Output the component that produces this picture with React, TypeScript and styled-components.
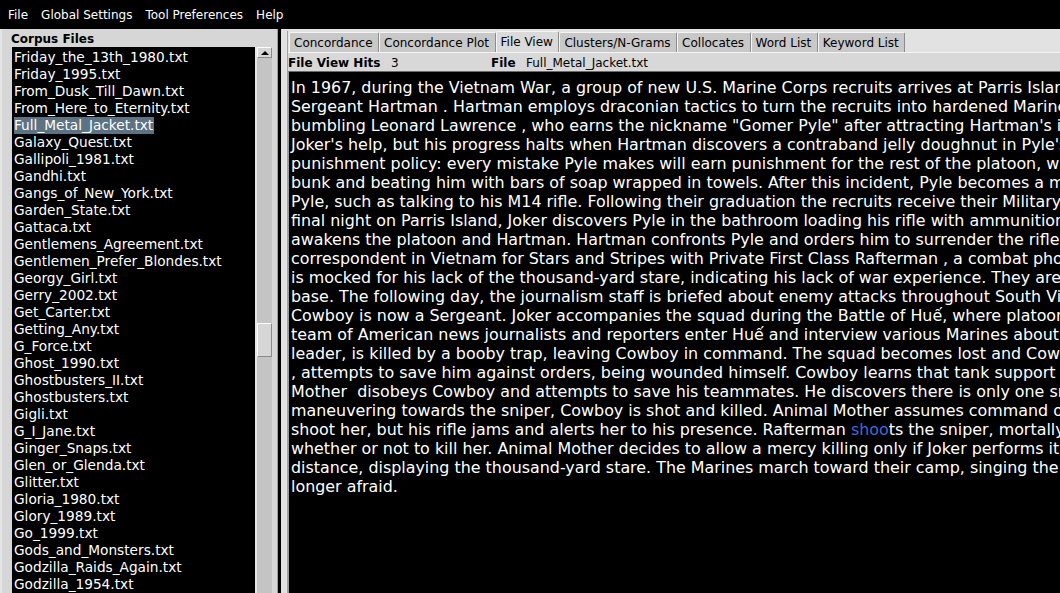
import React from 'react';
import styled, { createGlobalStyle } from 'styled-components';

const GlobalStyle = createGlobalStyle`
  html, body {
    margin: 0;
    padding: 0;
    overflow: hidden;
    background: #000;
  }
  * {
    box-sizing: border-box;
  }
`;

const Window = styled.div`
  width: 1060px;
  height: 593px;
  display: flex;
  flex-direction: column;
  overflow: hidden;
  font-family: 'DejaVu Sans', 'Liberation Sans', sans-serif;
  background: #d6d6d6;
`;

const MenuBar = styled.div`
  height: 29px;
  flex-shrink: 0;
  background: #000;
  display: flex;
  align-items: center;
  padding-left: 8px;
`;

const MenuItem = styled.span`
  color: #fff;
  font-size: 12px;
  margin-right: 13px;
`;

const Body = styled.div`
  flex: 1;
  display: flex;
  min-height: 0;
`;

const LeftPanel = styled.div`
  width: 277px;
  flex-shrink: 0;
  display: flex;
  flex-direction: column;
  background: #d6d6d6;
  border-left: 2px solid #e4e4e4;
`;

const PanelTitle = styled.div`
  height: 18px;
  flex-shrink: 0;
  padding: 1px 0 0 9px;
  font-size: 12px;
  font-weight: 700;
  color: #000;
  display: flex;
  align-items: center;
`;

const ListRow = styled.div`
  flex: 1;
  display: flex;
  min-height: 0;
  padding-left: 10px;
  padding-right: 5px;
`;

const FileList = styled.div`
  flex: 1;
  background: #000;
  padding: 2px 2px 0;
  overflow: hidden;
`;

const FileItem = styled.div`
  height: 17px;
  line-height: 17px;
  font-size: 13.7px;
  color: #fff;
  white-space: nowrap;
`;

const FileName = styled.span<{ $selected?: boolean }>`
  display: inline-block;
  height: 17px;
  padding-right: 1px;
  background: ${(p) => (p.$selected ? '#5d7283' : 'transparent')};
`;

const ScrollBar = styled.div`
  width: 17px;
  flex-shrink: 0;
  display: flex;
  flex-direction: column;
  background: #c4c4c4;
  border-left: 2px solid #e6e6e6;
`;

const ArrowButton = styled.div`
  height: 11px;
  background: #d6d6d6;
  border-top: 1px solid #fff;
  border-left: 1px solid #fff;
  border-bottom: 1px solid #8a8a8a;
  border-right: 1px solid #8a8a8a;
  display: flex;
  align-items: center;
  justify-content: center;
`;

const ArrowUp = styled.div`
  width: 0;
  height: 0;
  border-left: 4px solid transparent;
  border-right: 4px solid transparent;
  border-bottom: 4px solid #000;
`;

const Track = styled.div<{ $before: number }>`
  flex: 1;
  padding-top: ${(p) => p.$before}px;
`;

const Thumb = styled.div`
  height: 34px;
  background: #d6d6d6;
  border-top: 1px solid #fff;
  border-left: 1px solid #fff;
  border-bottom: 1px solid #8a8a8a;
  border-right: 1px solid #8a8a8a;
`;

const Divider = styled.div`
  width: 4px;
  flex-shrink: 0;
  background: #000;
  border-left: 1px solid #9a9a9a;
`;

const RightPanel = styled.div`
  flex: 1;
  min-width: 0;
  display: flex;
  flex-direction: column;
  background: #e2e2e2;
  padding: 2px 0 0 6px;
`;

const TabPane = styled.div`
  flex: 1;
  display: flex;
  flex-direction: column;
  min-height: 0;
  border-left: 1px solid #a0a0a0;
`;

const TabRow = styled.div`
  height: 21px;
  flex-shrink: 0;
  display: flex;
  align-items: flex-end;
  padding-left: 1px;
`;

const Tab = styled.div<{ $active?: boolean }>`
  height: ${(p) => (p.$active ? 21 : 20)}px;
  padding: 0 5.5px 0 4px;
  font-size: 12px;
  color: #000;
  display: flex;
  align-items: center;
  background: ${(p) => (p.$active ? '#dadada' : '#c8c8c8')};
  border-top: 1px solid #f4f4f4;
  border-left: 1px solid #f4f4f4;
  border-right: 1px solid #8c8c8c;
  border-top-left-radius: 2px;
  border-top-right-radius: 2px;
`;

const Content = styled.div`
  flex: 1;
  display: flex;
  flex-direction: column;
  min-height: 0;
  background: #d8d8d8;
  border-top: 1px solid #f4f4f4;
`;

const InfoRow = styled.div`
  height: 18px;
  flex-shrink: 0;
  display: flex;
  align-items: center;
  padding-top: 1px;
  font-size: 12px;
  color: #000;
  white-space: nowrap;
`;

const InfoLabel = styled.span<{ $width: number }>`
  display: inline-block;
  width: ${(p) => p.$width}px;
`;

const Bold = styled.b`
  font-weight: 700;
`;

const TextArea = styled.div`
  flex: 1;
  min-height: 0;
  background: #000;
  border-top: 1px solid #6a6a6a;
  border-left: 1px solid #9a9a9a;
  padding: 6px 0 0 2px;
  overflow: hidden;
`;

const TextLine = styled.div`
  font-size: 15.9px;
  line-height: 19px;
  color: #fff;
  white-space: pre;
`;

const Hit = styled.span`
  color: #3f69dc;
`;

const files = [
  'Friday_the_13th_1980.txt',
  'Friday_1995.txt',
  'From_Dusk_Till_Dawn.txt',
  'From_Here_to_Eternity.txt',
  'Full_Metal_Jacket.txt',
  'Galaxy_Quest.txt',
  'Gallipoli_1981.txt',
  'Gandhi.txt',
  'Gangs_of_New_York.txt',
  'Garden_State.txt',
  'Gattaca.txt',
  'Gentlemens_Agreement.txt',
  'Gentlemen_Prefer_Blondes.txt',
  'Georgy_Girl.txt',
  'Gerry_2002.txt',
  'Get_Carter.txt',
  'Getting_Any.txt',
  'G_Force.txt',
  'Ghost_1990.txt',
  'Ghostbusters_II.txt',
  'Ghostbusters.txt',
  'Gigli.txt',
  'G_I_Jane.txt',
  'Ginger_Snaps.txt',
  'Glen_or_Glenda.txt',
  'Glitter.txt',
  'Gloria_1980.txt',
  'Glory_1989.txt',
  'Go_1999.txt',
  'Gods_and_Monsters.txt',
  'Godzilla_Raids_Again.txt',
  'Godzilla_1954.txt',
];

const tabs = [
  'Concordance',
  'Concordance Plot',
  'File View',
  'Clusters/N-Grams',
  'Collocates',
  'Word List',
  'Keyword List',
];

const lines = [
  'In 1967, during the Vietnam War, a group of new U.S. Marine Corps recruits arrives at Parris Island',
  'Sergeant Hartman . Hartman employs draconian tactics to turn the recruits into hardened Marines',
  'bumbling Leonard Lawrence , who earns the nickname "Gomer Pyle" after attracting Hartman\'s ire',
  'Joker\'s help, but his progress halts when Hartman discovers a contraband jelly doughnut in Pyle\'s',
  'punishment policy: every mistake Pyle makes will earn punishment for the rest of the platoon, while',
  'bunk and beating him with bars of soap wrapped in towels. After this incident, Pyle becomes a model',
  'Pyle, such as talking to his M14 rifle. Following their graduation the recruits receive their Military',
  'final night on Parris Island, Joker discovers Pyle in the bathroom loading his rifle with ammunition',
  'awakens the platoon and Hartman. Hartman confronts Pyle and orders him to surrender the rifle.',
  'correspondent in Vietnam for Stars and Stripes with Private First Class Rafterman , a combat photographer',
  'is mocked for his lack of the thousand-yard stare, indicating his lack of war experience. They are',
  'base. The following day, the journalism staff is briefed about enemy attacks throughout South Vietnam',
  'Cowboy is now a Sergeant. Joker accompanies the squad during the Battle of Huế, where platoon',
  'team of American news journalists and reporters enter Huế and interview various Marines about',
  'leader, is killed by a booby trap, leaving Cowboy in command. The squad becomes lost and Cowboy',
  ', attempts to save him against orders, being wounded himself. Cowboy learns that tank support is',
  'Mother  disobeys Cowboy and attempts to save his teammates. He discovers there is only one sniper',
  'maneuvering towards the sniper, Cowboy is shot and killed. Animal Mother assumes command of',
  'shoot her, but his rifle jams and alerts her to his presence. Rafterman ',
  'whether or not to kill her. Animal Mother decides to allow a mercy killing only if Joker performs it.',
  'distance, displaying the thousand-yard stare. The Marines march toward their camp, singing the',
  'longer afraid.',
];

const App: React.FC = () => {
  return (
    <>
      <GlobalStyle />
      <Window>
        <MenuBar>
          <MenuItem>File</MenuItem>
          <MenuItem>Global Settings</MenuItem>
          <MenuItem>Tool Preferences</MenuItem>
          <MenuItem>Help</MenuItem>
        </MenuBar>
        <Body>
          <LeftPanel>
            <PanelTitle>Corpus Files</PanelTitle>
            <ListRow>
              <FileList>
                {files.map((f) => (
                  <FileItem key={f}>
                    <FileName $selected={f === 'Full_Metal_Jacket.txt'}>{f}</FileName>
                  </FileItem>
                ))}
              </FileList>
              <ScrollBar>
                <ArrowButton>
                  <ArrowUp />
                </ArrowButton>
                <Track $before={265}>
                  <Thumb />
                </Track>
              </ScrollBar>
            </ListRow>
          </LeftPanel>
          <Divider />
          <RightPanel>
            <TabPane>
              <TabRow>
                {tabs.map((t) => (
                  <Tab key={t} $active={t === 'File View'}>
                    {t}
                  </Tab>
                ))}
              </TabRow>
              <Content>
                <InfoRow>
                  <InfoLabel $width={103}>
                    <Bold>File View Hits</Bold>
                  </InfoLabel>
                  <InfoLabel $width={100}>3</InfoLabel>
                  <InfoLabel $width={35}>
                    <Bold>File</Bold>
                  </InfoLabel>
                  <span>Full_Metal_Jacket.txt</span>
                </InfoRow>
                <TextArea>
                  {lines.map((l, i) =>
                    i === 18 ? (
                      <TextLine key={i}>
                        {l}
                        <Hit>shoo</Hit>ts the sniper, mortally wounding
                      </TextLine>
                    ) : (
                      <TextLine key={i}>{l}</TextLine>
                    )
                  )}
                </TextArea>
              </Content>
            </TabPane>
          </RightPanel>
        </Body>
      </Window>
    </>
  );
};

export default App;
